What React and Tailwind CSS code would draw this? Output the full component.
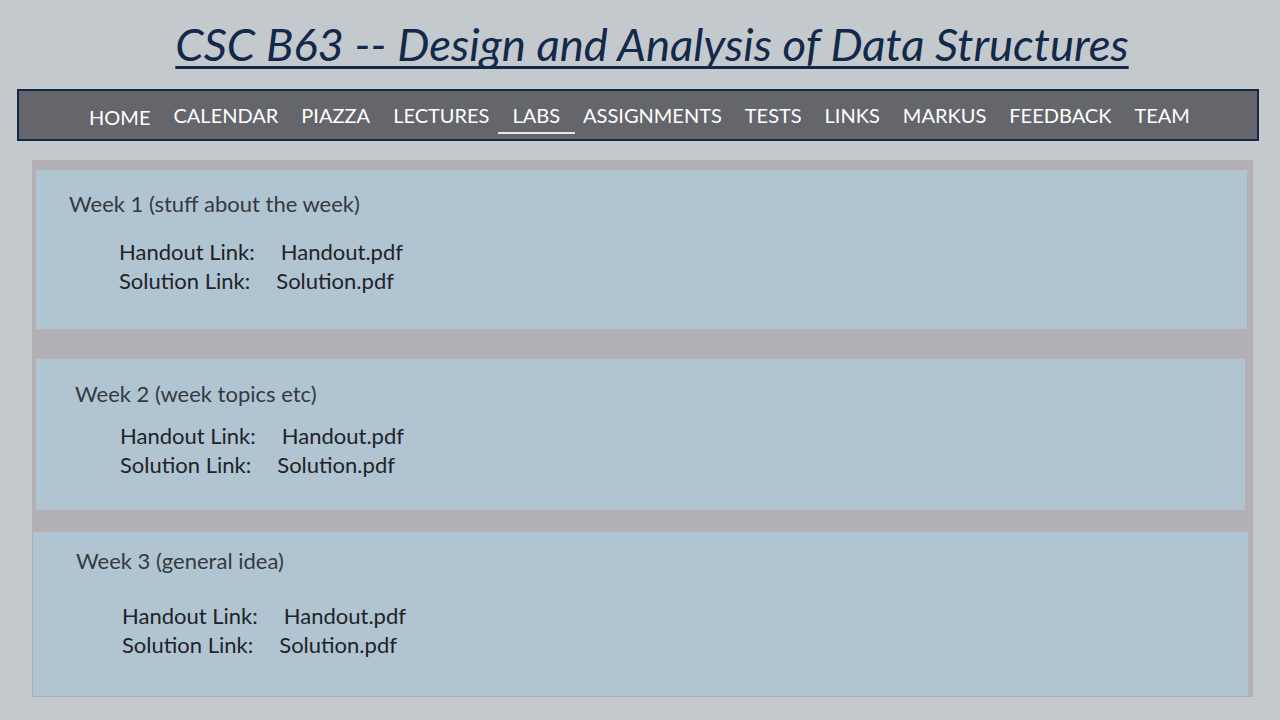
import React from "react";

const navItems = [
  "HOME",
  "CALENDAR",
  "PIAZZA",
  "LECTURES",
  "LABS",
  "ASSIGNMENTS",
  "TESTS",
  "LINKS",
  "MARKUS",
  "FEEDBACK",
  "TEAM",
];

const weeks = [
  { title: "Week 1 (stuff about the week)", box: "ml-[4px] mr-[6px] mt-[10px] h-[159px] pl-[33px] pt-[21px]", links: "mt-[20px] ml-[50px]" },
  { title: "Week 2 (week topics etc)", box: "ml-[4px] mr-[8px] mt-[30px] h-[152px] pl-[39px] pt-[22px]", links: "mt-[14px] ml-[45px]" },
  { title: "Week 3 (general idea)", box: "ml-[1px] mr-[5px] mt-[22px] h-[164px] pl-[43px] pt-[16px]", links: "mt-[27px] ml-[46px]" },
];

const WeekCard = ({ week }) => (
  <div className={`bg-[#b0c4d2] ${week.box}`}>
    <h2 className="text-[22px] leading-[26px] text-[#343a40]">{week.title}</h2>
    <div className={`text-[22px] leading-[29px] text-[#1f2327] ${week.links}`}>
      <div>
        Handout Link:<span className="ml-[26px]">Handout.pdf</span>
      </div>
      <div>
        Solution Link:<span className="ml-[26px]">Solution.pdf</span>
      </div>
    </div>
  </div>
);

const App = () => {
  return (
    <div className="w-[1280px] h-[720px] overflow-hidden bg-[#c4c9cd] font-['Lato','Liberation_Sans',sans-serif]">
      <h1 className="pt-[14px] pl-[24px] h-[89px] text-center">
        <span className="italic text-[#13294a] text-[45.5px] leading-[60px] underline decoration-[2.5px] underline-offset-[5px] [text-decoration-skip-ink:none]">
          CSC B63 -- Design and Analysis of Data Structures
        </span>
      </h1>

      <nav className="ml-[17px] mr-[21px] h-[52px] border-2 border-[#142a4a] bg-[#65666b] flex items-center justify-center gap-[23px] pl-[3px] text-white text-[20px]">
        {navItems.map((item) => (
          <a
            key={item}
            className={`relative ${item === "HOME" ? "mt-[3px]" : ""}`}
          >
            {item}
            {item === "LABS" && (
              <span className="absolute left-[-14px] right-[-15px] bottom-[-4px] h-[2px] bg-[#e8e8ea]" />
            )}
          </a>
        ))}
      </nav>

      <main className="ml-[32px] mr-[27px] mt-[19px] h-[537px] bg-[#b2b0b5] border-b border-[#a5afba] flex flex-col">
        {weeks.map((week) => (
          <WeekCard key={week.title} week={week} />
        ))}
      </main>
    </div>
  );
};

export default App;
